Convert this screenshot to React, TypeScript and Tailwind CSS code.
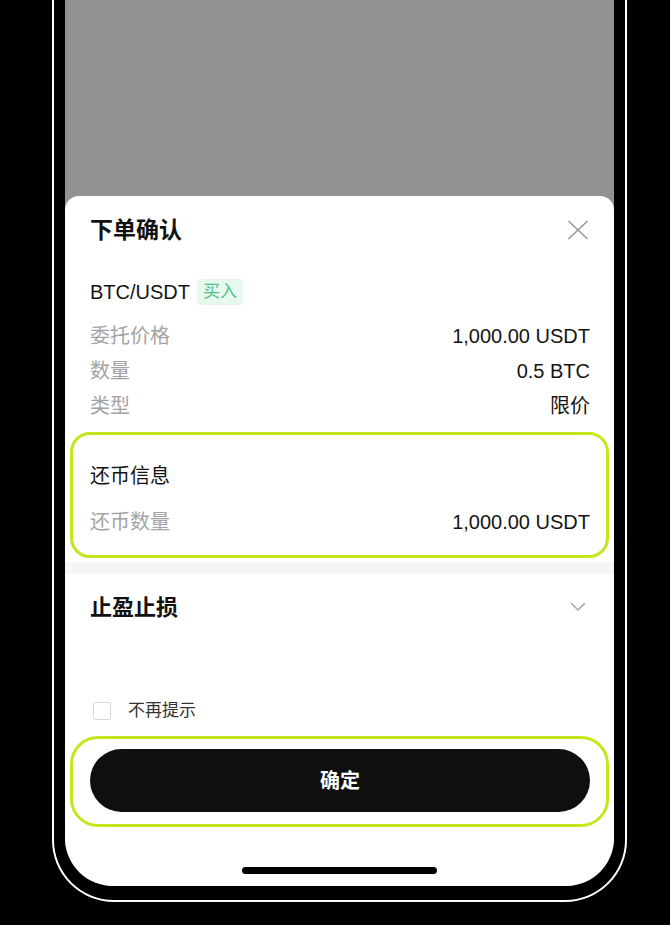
import React from "react";

function Row({ label, value }: { label: string; value: string }) {
  return (
    <div className="h-[35px] flex items-center justify-between">
      <span className="text-[20px] leading-none text-[#a3a3a3]">{label}</span>
      <span className="text-[20px] leading-none text-[#141414]">{value}</span>
    </div>
  );
}

export default function App() {
  return (
    <div className="w-[670px] h-[925px] bg-black overflow-hidden font-['Liberation_Sans','Noto_Sans_CJK_SC',sans-serif]">
      <div className="ml-[52px] w-[575px] h-[902px] border-2 border-t-0 border-white rounded-b-[62px] px-[11px] pb-[14px]">
        <div className="h-full rounded-b-[48px] overflow-hidden bg-[#929292] flex flex-col">
          <div className="h-[196px] shrink-0" />
          <div className="flex-1 bg-white rounded-t-[14px] flex flex-col">
            {/* title */}
            <div className="mt-[20px] h-[28px] pl-[25px] pr-[24px] flex items-center justify-between">
              <span className="text-[23px] font-bold text-[#111]">下单确认</span>
              <svg width="24" height="24" viewBox="0 0 24 24" fill="none">
                <path d="M3 3.5L21 20.5M21 3.5L3 20.5" stroke="#9b9b9b" strokeWidth="1.7" strokeLinecap="round" />
              </svg>
            </div>
            {/* pair */}
            <div className="mt-[34px] h-[28px] pl-[25px] pr-[24px] flex items-center gap-[7px]">
              <span className="text-[20px] text-[#141414]">BTC/USDT</span>
              <span className="h-[26px] px-[6px] flex items-center bg-[#e7f8ef] text-[#4cbf86] text-[17px] rounded-[2px]">买入</span>
            </div>
            <div className="mt-[12px] pl-[25px] pr-[24px] flex flex-col">
              <Row label="委托价格" value="1,000.00 USDT" />
              <Row label="数量" value="0.5 BTC" />
              <Row label="类型" value="限价" />
            </div>
            {/* highlighted repay box */}
            <div className="mt-[9px] mx-[5px] h-[126px] border-[3px] border-[#c7e51d] rounded-[20px] pl-[17px] pr-[16px] pt-[27px] flex flex-col">
              <div className="h-[28px] flex items-center">
                <span className="text-[20px] text-[#141414]">还币信息</span>
              </div>
              <div className="mt-[18px] h-[28px] flex items-center justify-between">
                <span className="text-[20px] text-[#a3a3a3]">还币数量</span>
                <span className="text-[20px] text-[#141414]">1,000.00 USDT</span>
              </div>
            </div>
            <div className="mt-[4px] h-[12px] bg-[#f6f6f6]" />
            {/* tp/sl */}
            <div className="mt-[19px] h-[28px] pl-[25px] pr-[28px] flex items-center justify-between">
              <span className="text-[22px] font-bold text-[#111]">止盈止损</span>
              <svg width="16" height="10" viewBox="0 0 16 10" fill="none">
                <path d="M1.5 1.5L8 8L14.5 1.5" stroke="#a8a8a8" strokeWidth="1.6" strokeLinecap="round" strokeLinejoin="round" />
              </svg>
            </div>
            {/* checkbox */}
            <div className="mt-[78px] h-[24px] pl-[28px] flex items-center gap-[17px]">
              <span className="w-[18px] h-[18px] border border-[#d9d9d9] rounded-[2px] bg-white" />
              <span className="text-[17px] text-[#333]">不再提示</span>
            </div>
            {/* confirm box */}
            <div className="mt-[13px] mx-[5px] h-[91px] border-[3px] border-[#c7e51d] rounded-[28px] pl-[17px] pr-[16px] pt-[10px]">
              <button className="w-full h-[63px] rounded-full bg-[#0f0f0f] text-white text-[20px] font-bold flex items-center justify-center">
                确定
              </button>
            </div>
            {/* home indicator */}
            <div className="mt-[40px] flex justify-center">
              <div className="w-[195px] h-[7px] rounded-full bg-black" />
            </div>
          </div>
        </div>
      </div>
    </div>
  );
}
